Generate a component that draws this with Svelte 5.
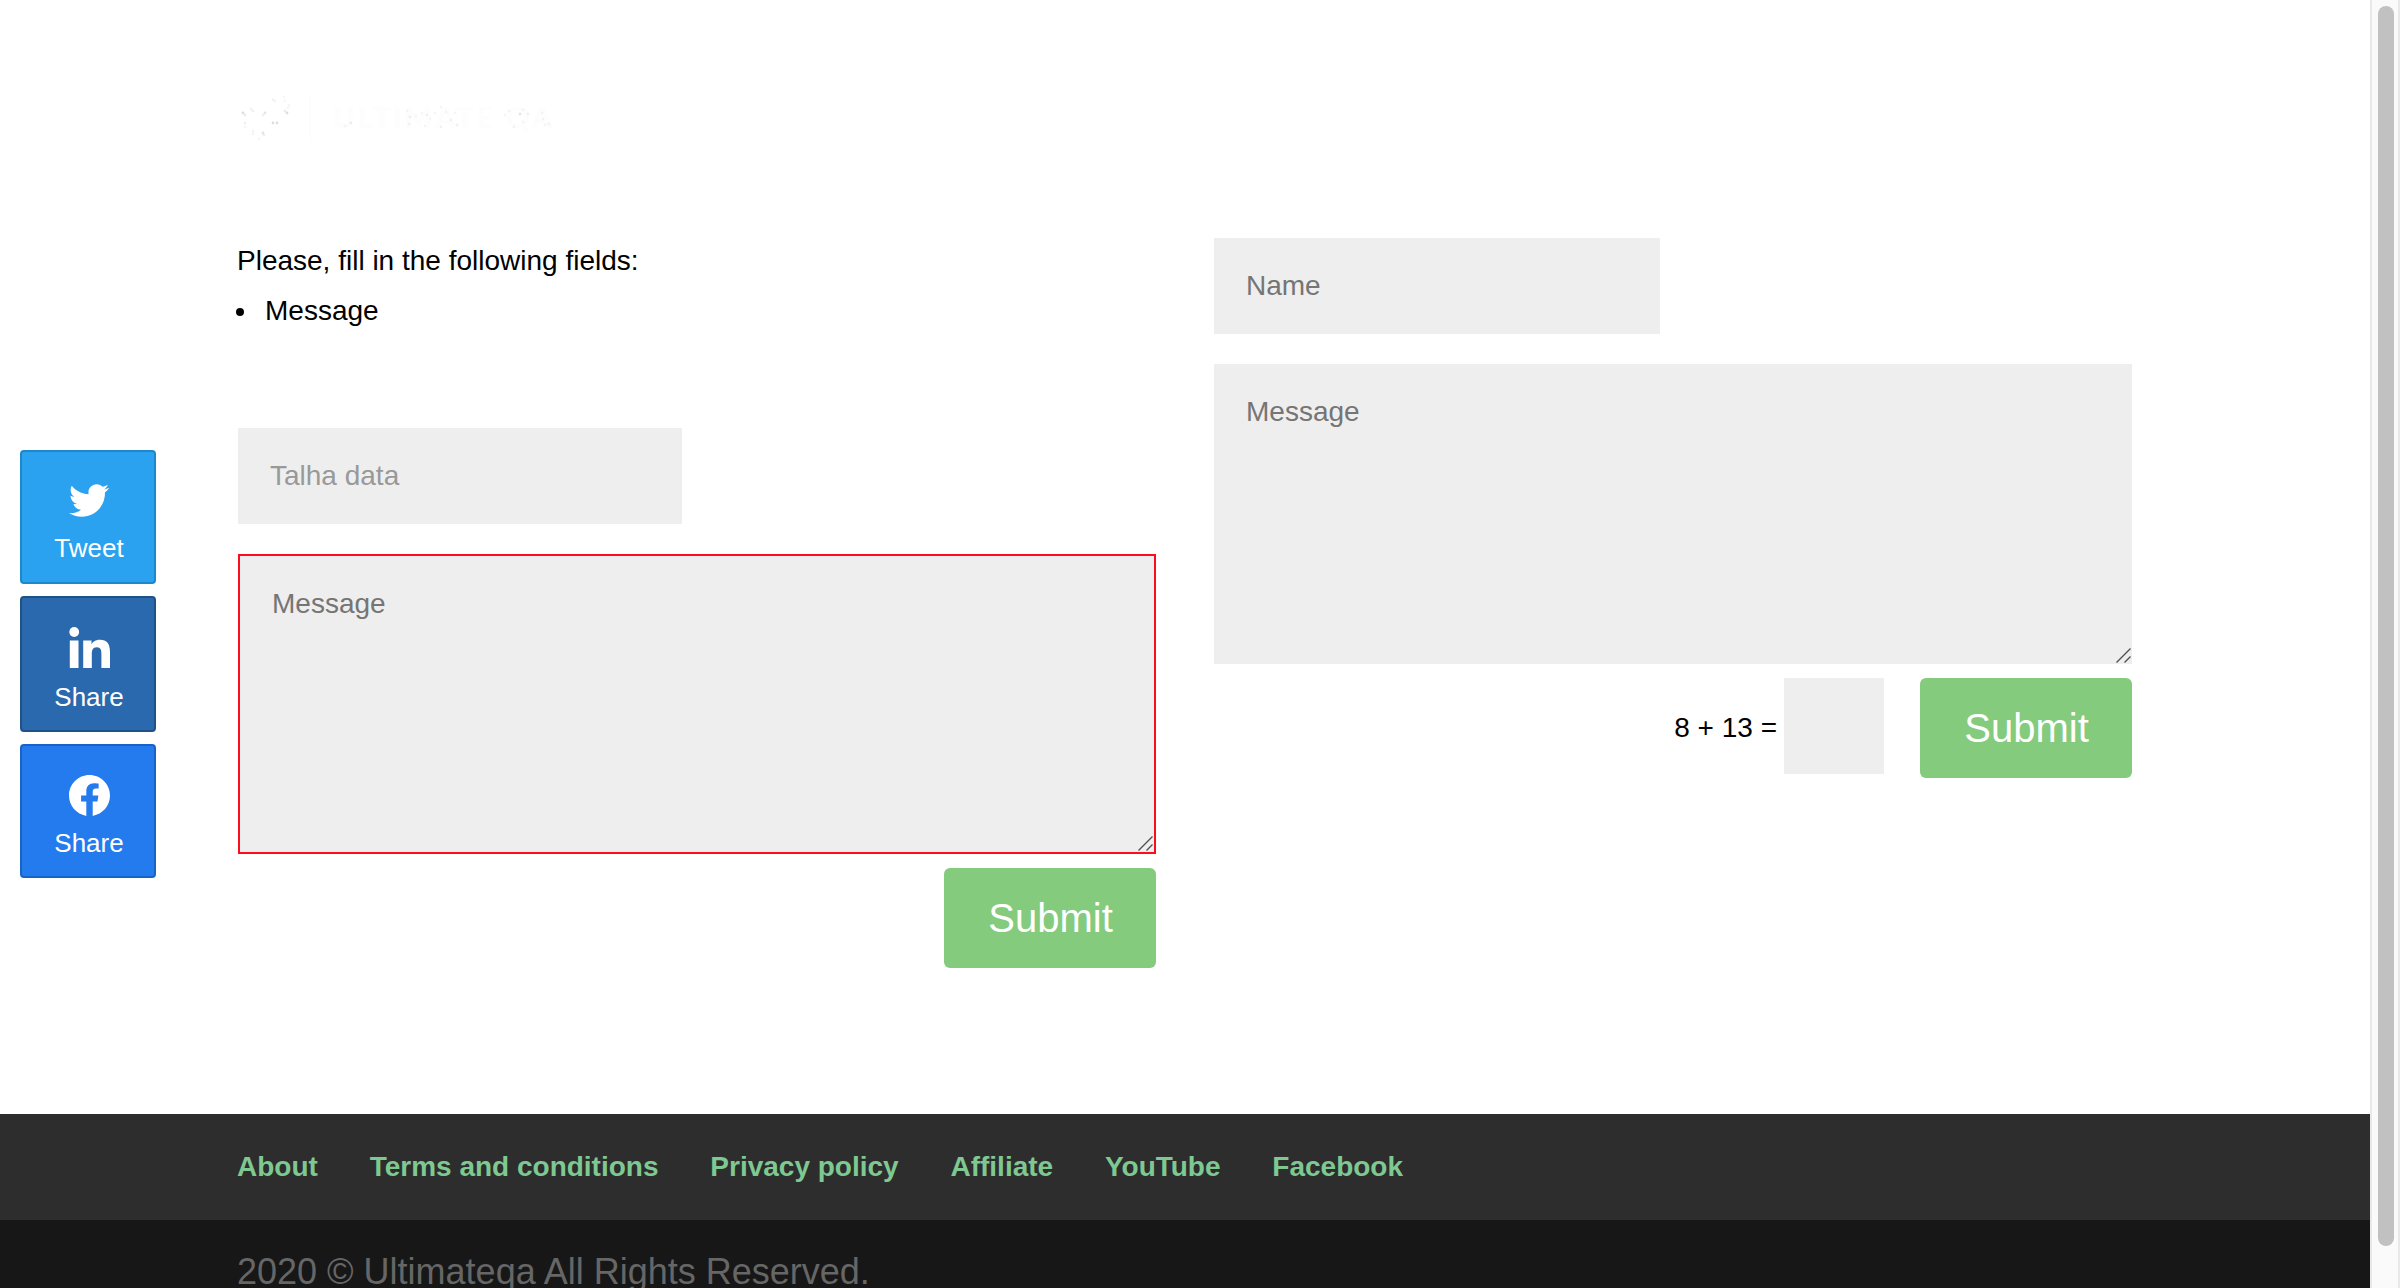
<script>
  const shares = [
    { id: 'twitter', label: 'Tweet' },
    { id: 'linkedin', label: 'Share' },
    { id: 'facebook', label: 'Share' },
  ];
  const links = ['About', 'Terms and conditions', 'Privacy policy', 'Affiliate', 'YouTube', 'Facebook'];
  // Faint flecks of the white logo, as [x, y, opacity]
  const flecks = [
    [5, 17, 0.13], [7, 19, 0.08], [13, 13, 0.05], [15, 15, 0.06], [27, 17, 0.1], [25, 19, 0.06],
    [35, 4, 0.05], [37, 5, 0.04], [46, 1, 0.03], [47, 5, 0.03], [51, 9, 0.04], [50, 12, 0.04],
    [47, 15, 0.08], [49, 17, 0.13], [35, 27, 0.13], [39, 27, 0.13], [7, 27, 0.06], [7, 31, 0.04],
    [15, 35, 0.04], [15, 38, 0.04], [25, 37, 0.1], [26, 39, 0.06], [21, 43, 0.04], [113, 27, 0.07],
    [107, 30, 0.03], [169, 15, 0.04], [172, 21, 0.06], [171, 28, 0.04], [178, 20, 0.03],
    [184, 17, 0.04], [187, 30, 0.04], [189, 19, 0.05], [192, 23, 0.03], [197, 17, 0.04],
    [203, 11, 0.04], [203, 31, 0.05], [208, 16, 0.04], [213, 24, 0.05], [217, 17, 0.04],
    [219, 29, 0.06], [267, 19, 0.04], [271, 15, 0.04], [282, 18, 0.1], [285, 14, 0.04],
    [285, 26, 0.04], [276, 31, 0.04], [290, 18, 0.05], [304, 17, 0.04],
    [305, 23, 0.05], [307, 29, 0.04], [311, 28, 0.04],
  ];
</script>

{#snippet grip()}
  <svg class="grip" viewBox="0 0 16 16" aria-hidden="true">
    <path d="M1.5 15.500 15.500 1.500M9.500 15.500 15.500 9.500" fill="none" stroke="#505050" stroke-width="1.400" />
  </svg>
{/snippet}

<div class="window">
  <div class="page">
    <main>
      <svg class="logo" width="330" height="48" viewBox="0 0 330 48" aria-hidden="true">
        <path d="M72 -2v45" stroke="#fcfcfc" stroke-width="1.500" />
        <text x="95" y="32" textLength="219" lengthAdjust="spacing">ULTIMATE QA</text>
        {#each flecks as [x, y, o]}
          <circle cx={x} cy={y} r="1.400" fill="#000" fill-opacity={o} />
        {/each}
      </svg>
      <div class="columns">
        <section>
          <div class="notice">
            <p>Please, fill in the following fields:</p>
            <ul><li>Message</li></ul>
          </div>
          <form>
            <input class="name filled" type="text" placeholder="Talha data" />
            <div class="area error"><textarea placeholder="Message"></textarea>{@render grip()}</div>
            <div class="actions"><button type="button">Submit</button></div>
          </form>
        </section>
        <section>
          <form>
            <input class="name" type="text" placeholder="Name" />
            <div class="area"><textarea placeholder="Message"></textarea>{@render grip()}</div>
            <div class="actions">
              <label><span>8 + 13 =</span><input class="captcha" type="text" /></label>
              <button type="button">Submit</button>
            </div>
          </form>
        </section>
      </div>
    </main>
    <footer>
      <nav>
        {#each links as link}<span>{link}</span>{/each}
      </nav>
      <div class="copyright">2020 © Ultimateqa All Rights Reserved.</div>
    </footer>
  </div>
  <div class="scrollbar"><div class="thumb"></div></div>

  <aside>
    {#each shares as { id, label }}
      <div class="share {id}">
        {#if id === 'twitter'}
          <svg viewBox="0 0 24 24"><path d="M23.954 4.569c-.885.389-1.830.654-2.825.775 1.014-.611 1.794-1.574 2.163-2.723-.951.555-2.005.959-3.127 1.184-.896-.959-2.173-1.559-3.591-1.559-2.717 0-4.920 2.203-4.920 4.917 0 .390.045.765.127 1.124C7.691 8.094 4.066 6.130 1.640 3.161c-.427.722-.666 1.561-.666 2.475 0 1.710.870 3.213 2.188 4.096-.807-.026-1.566-.248-2.228-.616v.061c0 2.385 1.693 4.374 3.946 4.827-.413.111-.849.171-1.296.171-.314 0-.615-.030-.916-.086.631 1.953 2.445 3.377 4.604 3.417-1.680 1.319-3.809 2.105-6.102 2.105-.390 0-.779-.023-1.170-.067 2.189 1.394 4.768 2.209 7.557 2.209 9.054 0 13.999-7.496 13.999-13.986 0-.209 0-.420-.015-.630.961-.689 1.800-1.560 2.460-2.548l-.047-.020z" /></svg>
        {:else if id === 'linkedin'}
          <svg viewBox="0 0 41 41"><circle cx="5.200" cy="5" r="4.900" /><path d="M.8 13.500h8.700V41H.8zM14.200 13.500h8.300v3.800c1.200-2.200 4-4.500 8.300-4.500C39.500 12.800 41 18.500 41 26v15h-8.600V27.500c0-3.200 0-7.300-4.500-7.300s-5.100 3.500-5.100 7.100V41h-8.600z" /></svg>
        {:else}
          <svg viewBox="0 0 24 24"><path d="M24 12.073C24 5.446 18.627.073 12 .073S0 5.446 0 12.073c0 5.990 4.388 10.954 10.125 11.854v-8.385H7.078v-3.470h3.047V9.430c0-3.007 1.792-4.669 4.533-4.669 1.312 0 2.686.235 2.686.235v2.953H15.830c-1.491 0-1.956.925-1.956 1.874v2.250h3.328l-.532 3.470h-2.796v8.385C19.612 23.027 24 18.063 24 12.073z" /></svg>
        {/if}
        <span>{label}</span>
      </div>
    {/each}
  </aside>
</div>

<style>
  :global(body) { margin: 0; overflow: hidden; background: #fff; }
  .window {
    position: relative;
    display: flex;
    height: 1288px;
    overflow: hidden;
    font: 28px/50px "Liberation Sans", Arial, sans-serif;
    color: #000;
  }
  .page { flex: 1; display: flex; flex-direction: column; }
  main { box-sizing: border-box; height: 1114px; padding: 96px 238px 0; flex: none; }
  .logo { display: block; height: 48px; overflow: visible; }
  .logo text { font: 700 29px Lato, sans-serif; fill: #fdfdfd; }
  .columns { display: grid; grid-template-columns: 918px 918px; gap: 58px; padding-top: 94px; }
  .notice { box-sizing: border-box; height: 190px; padding-top: 2px; margin-left: -1px; }
  p, ul { margin: 0; }
  section:first-child { margin-top: -4px; }
  section:first-child form { padding-top: 4px; }
  ul { list-style: none; padding: 0; }
  li { display: flex; align-items: center; padding-left: 29px; }
  li::before { content: ''; width: 8px; height: 8px; border-radius: 50%; background: #000; margin: 1px 21px 0 -30px; }
  form { display: flex; flex-direction: column; }
  input, textarea, button { box-sizing: border-box; font: inherit; border: 0; border-radius: 0; outline: 0; margin: 0; }
  input, textarea { background: #eee; color: #999; }
  ::placeholder { color: #757575; opacity: 1; }
  .filled::placeholder { color: #999; }
  .name { width: 446px; height: 96px; padding: 0 32px; margin-bottom: 30px; }
  .filled { width: 444px; }
  .area { position: relative; height: 300px; box-sizing: border-box; background: #eee; }
  .error { border: 2px solid #fb0d1b; }
  textarea { display: block; width: 100%; height: 100%; padding: 32px; line-height: 32px; resize: none; background: none; }
  .grip { position: absolute; right: 1px; bottom: 1px; width: 16px; height: 16px; }
  .actions { display: flex; justify-content: flex-end; align-items: flex-start; margin-top: 14px; }
  label { display: flex; align-items: center; gap: 7px; margin-right: 36px; }
  label span { padding-top: 4px; }
  .captcha { width: 100px; height: 96px; }
  button { width: 212px; height: 100px; padding: 0 0 0 1px; border-radius: 6px; background: #84cb7d; color: #fff; font-size: 40px; }
  nav { box-sizing: border-box; height: 106px; padding: 0 237px; display: flex; align-items: center; gap: 51.8px; background: #2d2d2d; color: #7ec891; font-weight: 700; }
  .copyright { height: 68px; padding: 0 237px; line-height: 103px; font-size: 36px; color: #666; background: #171717; overflow: hidden; }
  .scrollbar { box-sizing: border-box; width: 30px; padding: 6px 4px 0 6px; border: solid #e8e8e8; border-width: 0 2px; background: #fafafa; }
  .thumb { width: 16px; height: 1240px; border-radius: 8px; background: #c1c1c1; }
  aside { position: absolute; left: 20px; top: 450px; display: flex; flex-direction: column; gap: 12px; }
  .share { box-sizing: border-box; width: 136px; height: 134px; border: 2px solid; border-radius: 4px; display: flex; flex-direction: column; align-items: center; padding-top: 29px; color: #fff; font-size: 26px; line-height: 30px; }
  .share svg { width: 41px; height: 41px; fill: #fff; margin-left: 2px; }
  .share span { margin-top: 12px; margin-left: 2px; }
  .twitter { background: #2ba2ef; border-color: #1c87cb; }
  .twitter svg { margin-top: -1px; width: 40px; }
  .linkedin { height: 136px; background: #2a69ae; border-color: #205287; }
  .linkedin span { margin-top: 14px; }
  .facebook { background: #237bee; border-color: #1763c7; }
</style>
